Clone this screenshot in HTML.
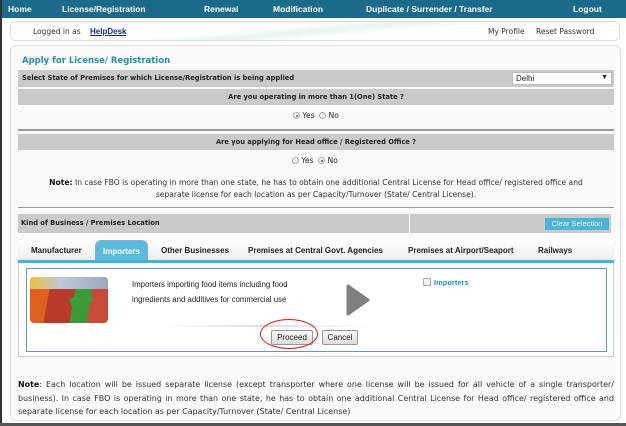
<!DOCTYPE html>
<html><head><style>
*{margin:0;padding:0;box-sizing:border-box}
body{width:626px;height:426px;position:relative;overflow:hidden;background:#fff;font-family:"Liberation Sans",sans-serif;font-size:8px;color:#222}
.a{position:absolute;white-space:nowrap}
.nav{position:absolute;left:0;top:0;width:626px;height:18px;background:#1b6a8c}
.nav span{position:absolute;top:4px;color:#fff;font-weight:bold;font-size:8.5px}
.gray{position:absolute;background:#cacaca;font-weight:bold;font-size:6.7px;font-family:"DejaVu Sans",sans-serif}
.sep{position:absolute;left:18px;width:596px;height:2px;background:#9a9a9a}
.rad{display:inline-block;width:7px;height:7px;border:1px solid #aaa;border-radius:50%;vertical-align:-1px;background:#f4f4f4;position:relative}
.rad.on:after{content:"";position:absolute;left:1.5px;top:1.5px;width:2px;height:2px;border-radius:50%;background:#555}
.btn{position:absolute;border:1px solid #999;background:linear-gradient(#fafafa,#ddd);font-size:8px;text-align:center;line-height:14px;border-radius:2px}
.tab{position:absolute;top:246px;font-weight:bold;font-size:8px;color:#222}
.dv{font-family:"DejaVu Sans",sans-serif}
</style></head><body>
<div class="nav">
<span style="left:8px">Home</span>
<span style="left:62px">License/Registration</span>
<span style="left:204px">Renewal</span>
<span style="left:273px">Modification</span>
<span style="left:366px">Duplicate / Surrender / Transfer</span>
<span style="left:573px">Logout</span>
</div>
<div class="a" style="left:0;top:0;width:4px;height:426px;border-left:2px solid #333"></div>
<div class="a" style="left:10px;top:21px;width:610px;height:20px;border:1px solid #ddd;border-radius:6px;background:linear-gradient(175deg,#fff 40%,#e8f3f0 50%,#fff 60%)"></div>
<div class="a dv" style="left:33px;top:27px;font-size:7.5px;color:#333">Logged in as</div>
<div class="a" style="left:90px;top:27px;font-size:8px;font-weight:bold;color:#1a2f7a;text-decoration:underline">HelpDesk</div>
<div class="a dv" style="left:488px;top:27px;font-size:7.5px;color:#333">My Profile</div>
<div class="a dv" style="left:536px;top:27px;font-size:7.5px;color:#333">Reset Password</div>
<div class="a" style="left:10px;top:45px;width:611px;height:376px;border:1px solid #ddd;border-radius:6px;background:#fafafa"></div>
<div class="a dv" style="left:22px;top:56px;font-size:8.5px;font-weight:bold;color:#2a8fa8">Apply for License/ Registration</div>
<div class="gray" style="left:18px;top:70px;width:596px;height:17px;padding:4px 4px">Select State of Premises for which License/Registration is being applied</div>
<div class="a" style="left:512px;top:72px;width:100px;height:13px;background:#fff;border:1px solid #bbb;font-size:8px;padding:1px 3px">Delhi<span style="position:absolute;right:3px;top:1px;font-size:7px">▼</span></div>
<div class="gray" style="left:18px;top:89px;width:596px;height:16px;text-align:center;padding-top:4px">Are you operating in more than 1(One) State ?</div>
<div class="a dv" style="left:293px;top:111px;font-size:7.5px"><span class="rad on"></span> Yes &nbsp;<span class="rad"></span> No</div>
<div class="sep" style="top:129px"></div>
<div class="gray" style="left:18px;top:134px;width:596px;height:16px;text-align:center;padding-top:4px">Are you applying for Head office / Registered Office ?</div>
<div class="a dv" style="left:292px;top:156px;font-size:7.5px"><span class="rad"></span> Yes &nbsp;<span class="rad on"></span> No</div>
<div class="a dv" style="left:18px;top:177px;width:596px;text-align:center;font-size:7.6px;line-height:11.5px;white-space:normal;color:#333"><b style="color:#111">Note:</b> In case FBO is operating in more than one state, he has to obtain one additional Central License for Head office/ registered office and<br>separate license for each location as per Capacity/Turnover (State/ Central License).</div>
<div class="sep" style="top:207px;height:1px"></div>
<div class="gray" style="left:18px;top:214px;width:391px;height:19px;padding:5px 3px">Kind of Business / Premises Location</div>
<div class="gray" style="left:410px;top:214px;width:201px;height:19px"></div>
<div class="a" style="left:545px;top:218px;width:64px;height:12px;background:#4cb4d4;color:#e8f8ff;font-size:7.5px;text-align:center;line-height:12px">Clear Selection</div>
<div class="a" style="left:18px;top:240px;width:596px;height:20px;background:linear-gradient(#fff,#eee)"></div>
<div class="tab" style="left:31px">Manufacturer</div>
<div class="a" style="left:95px;top:240px;width:53px;height:21px;background:#5cbbdc;border:1px solid #8ad;border-radius:6px 6px 0 0;color:#fff;font-weight:bold;text-align:center;padding-top:6px">Importers</div>
<div class="tab" style="left:161px">Other Businesses</div>
<div class="tab" style="left:248px">Premises at Central Govt. Agencies</div>
<div class="tab" style="left:408px">Premises at Airport/Seaport</div>
<div class="tab" style="left:538px">Railways</div>
<div class="a" style="left:18px;top:260px;width:596px;height:3px;background:#48b2d3"></div>
<div class="a" style="left:18px;top:263px;width:596px;height:94px;border:1px solid #ccc;border-top:none;background:#fff"></div>
<div class="a" style="left:26px;top:268px;width:581px;height:84px;border:1px solid #6a98a8"></div>
<div class="a" style="left:30px;top:277px;width:78px;height:46px;border-radius:4px;background:linear-gradient(100deg,#e06020 0 25%,#b83a2a 25% 55%,#3a9a3a 55% 75%,#c84a3a 75%);overflow:hidden">
<div style="position:absolute;left:0;top:0;width:78px;height:12px;background:linear-gradient(90deg,#e8c040,#c0c8d8 40%,#9ab 100%)"></div>
<div style="position:absolute;left:40px;top:18px;width:22px;height:10px;background:#3c9c3c;transform:rotate(-20deg)"></div></div>
<div class="a" style="left:132px;top:277px;font-size:7.8px;line-height:15px;color:#222">Importers importing food items including food<br>ingredients and additives for commercial use</div>
<svg class="a" style="left:346px;top:284px" width="24" height="32"><path d="M2 2 L22 16 L2 30 Z" fill="#808080" stroke="#808080" stroke-width="3" stroke-linejoin="round"/></svg>
<div class="a" style="left:423px;top:278px;width:8px;height:8px;border:1px solid #aaa;background:#f4f4f4;border-radius:1px"></div>
<div class="a" style="left:434px;top:278px;font-size:7.5px;font-weight:bold;color:#2a8fc0">Importers</div>
<div class="a" style="left:160px;top:325px;width:210px;height:2px;background:linear-gradient(90deg,#fff,#ddd,#fff)"></div>
<div class="btn" style="left:271px;top:330px;width:42px;height:15px">Proceed</div>
<div class="btn" style="left:322px;top:330px;width:36px;height:15px">Cancel</div>
<div class="a" style="left:260px;top:319px;width:58px;height:30px;border:1.5px solid #d02020;border-radius:50%"></div>
<div class="a dv" style="left:18px;top:378px;width:596px;font-size:7.95px;line-height:13.5px;white-space:normal;text-align:justify;color:#333"><b style="color:#111">Note</b>: Each location will be issued separate license (except transporter where one license will be issued for all vehicle of a single transporter/ business). In case FBO is operating in more than one state, he has to obtain one additional Central License for Head office/ registered office and separate license for each location as per Capacity/Turnover (State/ Central License)</div>
<div class="a" style="left:0;top:423px;width:626px;height:3px;background:#555"></div>
</body></html>
